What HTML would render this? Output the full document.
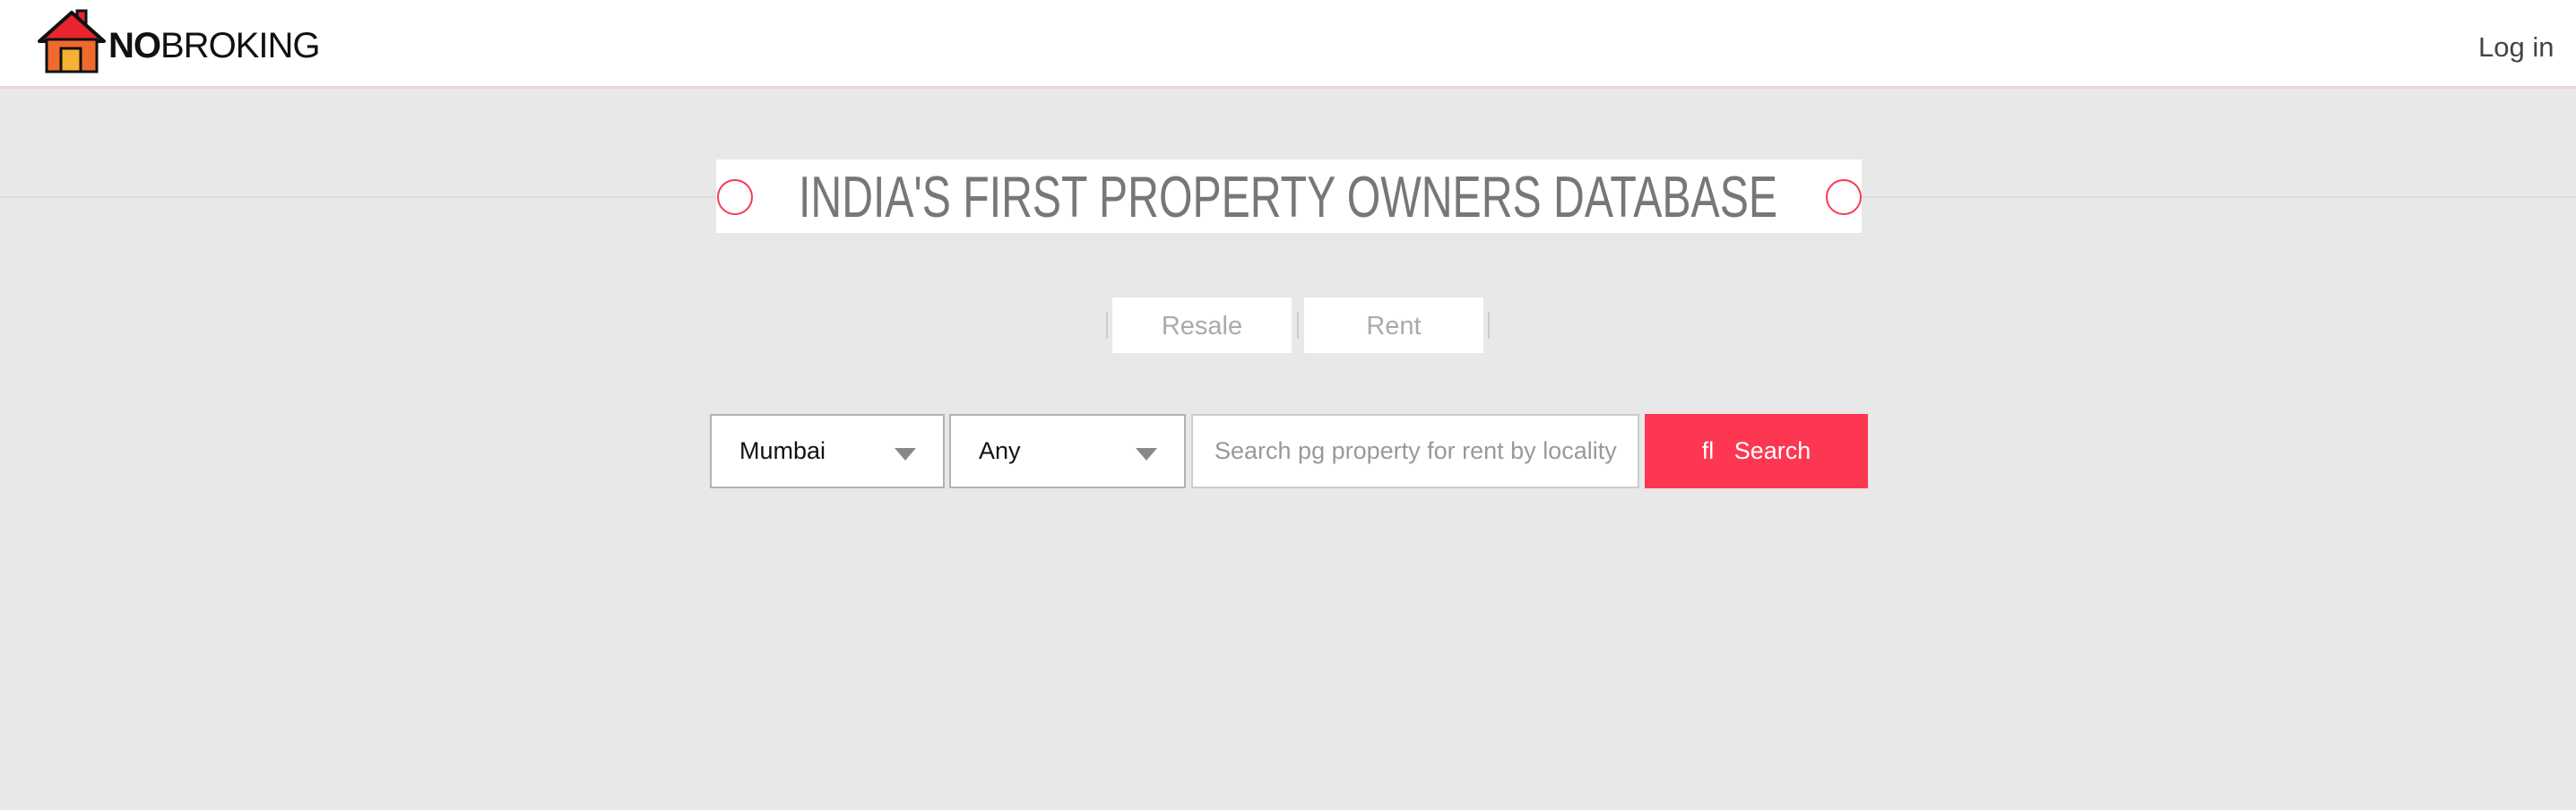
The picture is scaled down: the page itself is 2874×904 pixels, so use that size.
<!DOCTYPE html>
<html><head><meta charset="utf-8"><style>
*{margin:0;padding:0;box-sizing:border-box}
body{width:2874px;height:904px;background:#e8e8e8;position:relative;overflow:hidden;font-family:"Liberation Sans",sans-serif}
.a{position:absolute}
.hdr{left:0;top:0;width:2874px;height:99px;background:#fff;border-bottom:3px solid #efd5d5}
.box{background:#fff;display:flex;align-items:center}
.sel{border:2px solid #b5b0b5;font-size:27px;color:#111;padding-left:31px}
.tri{position:absolute;width:0;height:0;border-left:12px solid transparent;border-right:12px solid transparent;border-top:14px solid #888;top:36px}
.sep{width:2px;height:30px;background:#ccc;top:348px}
</style></head><body>
<div class="a hdr"></div>
<svg class="a" style="left:40px;top:8px" width="80" height="76" viewBox="0 0 80 76">
<rect x="46" y="4" width="10" height="20" fill="#e8242f" stroke="#111" stroke-width="3"/>
<polygon points="4,38 40,6 76,38" fill="#e8242f" stroke="#111" stroke-width="4" stroke-linejoin="round"/>
<rect x="12" y="36" width="56" height="36" fill="#ef6a2c" stroke="#111" stroke-width="3"/>
<rect x="28" y="46" width="22" height="26" fill="#f4b133" stroke="#111" stroke-width="3"/>
</svg>
<div class="a" style="left:121px;top:29px;font-size:40px;color:#111;letter-spacing:-1px;line-height:44px"><b>NO</b>BROKING</div>
<div class="a" style="left:2765px;top:34px;font-size:31px;color:#444;line-height:38px">Log in</div>
<div class="a" style="left:0;top:219px;width:2874px;height:2px;background:#dcdcdc"></div>
<div class="a" style="left:799px;top:178px;width:1278px;height:82px;background:#fff"></div>
<svg class="a" style="left:799px;top:178px" width="1278" height="82">
<circle cx="21" cy="42" r="19" fill="none" stroke="#fd3752" stroke-width="2"/>
<circle cx="1258" cy="42" r="19" fill="none" stroke="#fd3752" stroke-width="2"/>
<text x="92" y="63" font-family="Liberation Sans" font-size="60" fill="#777" textLength="1092" lengthAdjust="spacingAndGlyphs" transform="translate(0,-4) scale(1,1.08)">INDIA'S FIRST PROPERTY OWNERS DATABASE</text>
</svg>
<div class="a sep" style="left:1234px"></div>
<div class="a sep" style="left:1447px"></div>
<div class="a sep" style="left:1660px"></div>
<div class="a box" style="left:1241px;top:332px;width:200px;height:62px;justify-content:center;font-size:29px;color:#aaa;padding-top:3px">Resale</div>
<div class="a box" style="left:1455px;top:332px;width:200px;height:62px;justify-content:center;font-size:29px;color:#aaa;padding-top:3px">Rent</div>
<div class="a box sel" style="left:792px;top:462px;width:262px;height:83px">Mumbai<span class="tri" style="left:204px"></span></div>
<div class="a box sel" style="left:1059px;top:462px;width:264px;height:83px">Any<span class="tri" style="left:206px"></span></div>
<div class="a box" style="left:1329px;top:462px;width:500px;height:83px;border:2px solid #ccc;padding-left:24px;font-size:27px;color:#999">Search pg property for rent by locality</div>
<div class="a box" style="left:1835px;top:462px;width:249px;height:83px;background:#fd3752;justify-content:center;color:#fff;font-size:27px">fl&nbsp;&nbsp;&nbsp;Search</div>
</body></html>
